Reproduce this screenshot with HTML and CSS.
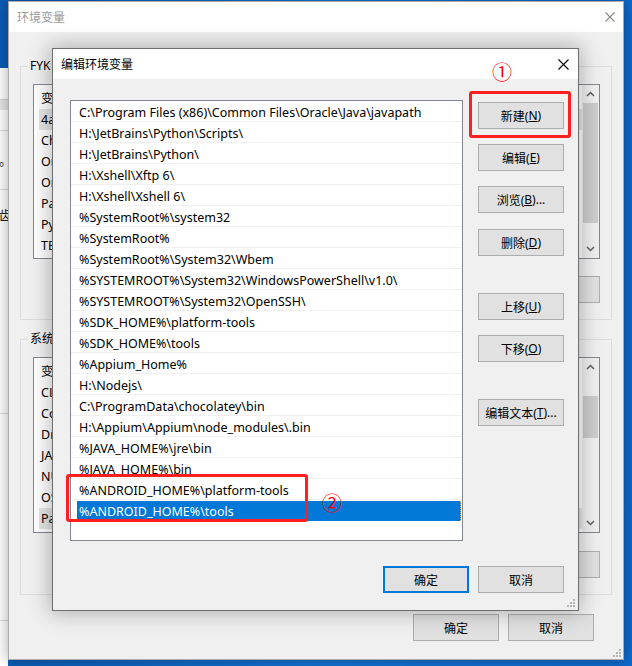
FILE: index.html
```html
<!DOCTYPE html>
<html lang="zh-CN">
<head>
<meta charset="utf-8">
<title>编辑环境变量</title>
<link rel="stylesheet" href="styles.css">
</head>
<body>
<div class="behind">
  <div class="bh-band"></div>
  <div class="bh-line l1"></div>
  <div class="bh-text t1">设置。</div>
  <div class="bh-line l2"></div>
  <div class="bh-text t2">环境变量齿</div>
  <div class="bh-line l3"></div>
  <div class="bh-line l4"></div>
</div>

<div class="envwin">
  <div class="titlebar">
    <span class="title inactive">环境变量</span>
    <svg class="close" width="10" height="10" viewBox="0 0 10 10"><path d="M0.5 0.5L9.5 9.5M9.5 0.5L0.5 9.5" stroke="#8a8a8a" stroke-width="1.1" fill="none"/></svg>
  </div>
  <div class="envbody">
    <div class="group group-user">
      <span class="legend">FYK 的用户变量(U)</span>
      <div class="biglist">
        <div class="bl-content">
          <div class="bl-head"><span class="c1">变量</span><span>值</span></div>
          <div class="bl-row sel"><span class="c1">4a</span><span>C:\4a</span></div>
          <div class="bl-row"><span class="c1">ChocolateyLastPathUpdate</span><span>132</span></div>
          <div class="bl-row"><span class="c1">OneDrive</span><span>C:\Users\FYK\OneDrive</span></div>
          <div class="bl-row"><span class="c1">OneDriveConsumer</span><span>C:\Users\FYK\OneDrive</span></div>
          <div class="bl-row"><span class="c1">Path</span><span>C:\Users\FYK\AppData</span></div>
          <div class="bl-row"><span class="c1">PyCharm</span><span>H:\JetBrains</span></div>
          <div class="bl-row"><span class="c1">TEMP</span><span>C:\Users\FYK\AppData\Local\Temp</span></div>
        </div>
        <div class="vscroll">
          <svg class="arrow" width="9" height="6" viewBox="0 0 9 6"><path d="M1 5L4.5 1.5L8 5" stroke="#606060" stroke-width="1.5" fill="none"/></svg>
          <div class="thumb thumb-user"></div>
          <svg class="arrow down" width="9" height="6" viewBox="0 0 9 6"><path d="M1 1L4.5 4.5L8 1" stroke="#606060" stroke-width="1.5" fill="none"/></svg>
        </div>
      </div>
      <div class="btnrow">
        <div class="btn">新建(<u>N</u>)...</div>
        <div class="btn">编辑(<u>E</u>)...</div>
        <div class="btn">删除(<u>D</u>)</div>
      </div>
    </div>

    <div class="group group-sys">
      <span class="legend">系统变量(S)</span>
      <div class="biglist">
        <div class="bl-content">
          <div class="bl-head"><span class="c1">变量</span><span>值</span></div>
          <div class="bl-row"><span class="c1">CLASSPATH</span><span>.;%JAVA_HOME%\lib</span></div>
          <div class="bl-row"><span class="c1">ComSpec</span><span>C:\Windows\system32\cmd.exe</span></div>
          <div class="bl-row"><span class="c1">DriverData</span><span>C:\Windows\System32\Drivers\DriverData</span></div>
          <div class="bl-row"><span class="c1">JAVA_HOME</span><span>C:\Program Files\Java</span></div>
          <div class="bl-row"><span class="c1">NUMBER_OF_PROCESSORS</span><span>8</span></div>
          <div class="bl-row"><span class="c1">OS</span><span>Windows_NT</span></div>
          <div class="bl-row sel"><span class="c1">Path</span><span>C:\Program Files (x86)\Common Files</span></div>
        </div>
        <div class="vscroll">
          <svg class="arrow" width="9" height="6" viewBox="0 0 9 6"><path d="M1 5L4.5 1.5L8 5" stroke="#606060" stroke-width="1.5" fill="none"/></svg>
          <div class="thumb thumb-sys"></div>
          <svg class="arrow down" width="9" height="6" viewBox="0 0 9 6"><path d="M1 1L4.5 4.5L8 1" stroke="#606060" stroke-width="1.5" fill="none"/></svg>
        </div>
      </div>
      <div class="btnrow">
        <div class="btn">新建(<u>W</u>)...</div>
        <div class="btn">编辑(<u>I</u>)...</div>
        <div class="btn">删除(<u>L</u>)</div>
      </div>
    </div>

    <div class="footrow outer">
      <div class="btn">确定</div>
      <div class="btn">取消</div>
    </div>
  </div>
  <svg class="grip grip-bg" width="9" height="9" viewBox="0 0 9 9"><g fill="#b4b4b4"><rect x="7" y="1" width="2" height="2"/><rect x="4" y="4" width="2" height="2"/><rect x="7" y="4" width="2" height="2"/><rect x="1" y="7" width="2" height="2"/><rect x="4" y="7" width="2" height="2"/><rect x="7" y="7" width="2" height="2"/></g></svg>
</div>

<div class="editdlg">
  <div class="titlebar dlg-title">
    <span class="title">编辑环境变量</span>
    <svg class="close" width="11" height="11" viewBox="0 0 11 11"><path d="M0.5 0.5L10.5 10.5M10.5 0.5L0.5 10.5" stroke="#000" stroke-width="1.1" fill="none"/></svg>
  </div>
  <div class="dlgbody">
    <div class="mainrow">
      <div class="pathlist">
        <div class="prow">C:\Program Files (x86)\Common Files\Oracle\Java\javapath</div>
        <div class="prow">H:\JetBrains\Python\Scripts\</div>
        <div class="prow">H:\JetBrains\Python\</div>
        <div class="prow">H:\Xshell\Xftp 6\</div>
        <div class="prow">H:\Xshell\Xshell 6\</div>
        <div class="prow">%SystemRoot%\system32</div>
        <div class="prow">%SystemRoot%</div>
        <div class="prow">%SystemRoot%\System32\Wbem</div>
        <div class="prow">%SYSTEMROOT%\System32\WindowsPowerShell\v1.0\</div>
        <div class="prow">%SYSTEMROOT%\System32\OpenSSH\</div>
        <div class="prow">%SDK_HOME%\platform-tools</div>
        <div class="prow">%SDK_HOME%\tools</div>
        <div class="prow">%Appium_Home%</div>
        <div class="prow">H:\Nodejs\</div>
        <div class="prow">C:\ProgramData\chocolatey\bin</div>
        <div class="prow">H:\Appium\Appium\node_modules\.bin</div>
        <div class="prow">%JAVA_HOME%\jre\bin</div>
        <div class="prow">%JAVA_HOME%\bin</div>
        <div class="prow">%ANDROID_HOME%\platform-tools</div>
        <div class="prow selected"><span class="seltext">%ANDROID_HOME%\tools</span></div>
      </div>
      <div class="btncol">
        <div class="btn b-new">新建(<u>N</u>)</div>
        <div class="btn b-edit">编辑(<u>E</u>)</div>
        <div class="btn b-browse">浏览(<u>B</u>)...</div>
        <div class="btn b-del">删除(<u>D</u>)</div>
        <div class="btn b-up">上移(<u>U</u>)</div>
        <div class="btn b-down">下移(<u>O</u>)</div>
        <div class="btn b-text">编辑文本(<u>T</u>)...</div>
      </div>
    </div>
    <div class="footrow inner">
      <div class="btn default">确定</div>
      <div class="btn">取消</div>
    </div>
  </div>
  <svg class="grip grip-dlg" width="9" height="9" viewBox="0 0 9 9"><g fill="#b4b4b4"><rect x="7" y="1" width="2" height="2"/><rect x="4" y="4" width="2" height="2"/><rect x="7" y="4" width="2" height="2"/><rect x="1" y="7" width="2" height="2"/><rect x="4" y="7" width="2" height="2"/><rect x="7" y="7" width="2" height="2"/></g></svg>
</div>

<div class="redbox rb1"></div>
<div class="redbox rb2"></div>
<span class="circnum n1">①</span>
<span class="circnum n2">②</span>
</body>
</html>
```

FILE: styles.css
```css
* { box-sizing: border-box; }

body {
  margin: 0;
  width: 632px;
  height: 666px;
  overflow: hidden;
  position: relative;
  font-family: "Noto Sans", "Noto Sans CJK SC", sans-serif;
  font-size: 12px;
  color: #000;
  background: linear-gradient(90deg, #0a5cb6 0%, #1473d2 50%, #0f6acb 100%);
}

u { text-decoration: underline; text-underline-offset: 1px; }

/* window partially hidden at the far left */
.behind {
  position: absolute;
  left: -200px;
  top: 68px;
  width: 208px;
  height: 598px;
  background: #fff;
  overflow: hidden;
}
.bh-band { position: absolute; left: 0; right: 0; top: 31px; height: 11px; background: #e6e6e6; border-top: 1px solid #d0d0d0; }
.bh-line { position: absolute; left: 0; right: 0; height: 1px; background: #dcdcdc; }
.bh-line.l1 { top: 62px; }
.bh-line.l2 { top: 121px; }
.bh-line.l3 { top: 345px; }
.bh-line.l4 { top: 552px; }
.bh-text { position: absolute; right: -4px; font-size: 13px; color: #222; }
.bh-text.t1 { top: 82px; }
.bh-text.t2 { top: 137px; }

/* background window */
.envwin {
  position: absolute;
  left: 8px;
  top: 1px;
  width: 616px;
  height: 659px;
  background: #f0f0f0;
  border: 1px solid #aaaaaa;
  display: flex;
  flex-direction: column;
  box-shadow: 0 0 14px rgba(0, 0, 0, 0.35);
}

.titlebar {
  flex: none;
  height: 30px;
  background: #fff;
  display: flex;
  align-items: center;
  justify-content: space-between;
  padding: 0 8px 0 8px;
}
.title { font-size: 12px; }
.title.inactive { color: #9a9a9a; }

.envbody {
  padding: 0 11px;
  display: flex;
  flex-direction: column;
}

.group {
  position: relative;
  border: 1px solid #dcdcdc;
  padding: 17px 11px 0 12px;
}
.group-user { margin-top: 34px; height: 254px; }
.group-sys { margin-top: 19px; height: 256px; }

.legend {
  position: absolute;
  left: 7px;
  top: -10px;
  padding: 0 2px;
  background: #f0f0f0;
  line-height: 18px;
}

.biglist {
  height: 175px;
  background: #fff;
  border: 1px solid #828790;
  display: flex;
  overflow: hidden;
  font-size: 12.5px;
}
.group-sys .biglist { height: 176px; }
.bl-content { flex: 1; overflow: hidden; }
.bl-head {
  height: 24px;
  display: flex;
  align-items: center;
  padding-left: 7px;
  white-space: nowrap;
}
.bl-row {
  height: 21px;
  display: flex;
  align-items: center;
  padding-left: 2px;
  margin-left: 5px;
  white-space: nowrap;
}
.bl-row.sel { background: #e5e5e5; }
.c1 { width: 160px; flex: none; }

.vscroll {
  flex: none;
  width: 17px;
  background: #f0f0f0;
  display: flex;
  flex-direction: column;
  align-items: center;
}
.vscroll .arrow { flex: none; margin-top: 6px; }
.vscroll .arrow.down { margin-top: auto; margin-bottom: 6px; }
.thumb { width: 15px; background: #cdcdcd; flex: none; }
.thumb-user { margin-top: 6px; height: 120px; }
.thumb-sys { margin-top: 26px; height: 42px; }

.btnrow {
  margin-top: 17px;
  display: flex;
  justify-content: flex-end;
  gap: 9px;
}
.group-sys .btnrow { margin-top: 18px; }

.btn {
  height: 27px;
  width: 86px;
  flex: none;
  background: #e1e1e1;
  border: 1px solid #adadad;
  display: flex;
  align-items: center;
  justify-content: center;
  white-space: nowrap;
}
.btn.default { border: 2px solid #0078d7; }

.footrow {
  display: flex;
  justify-content: flex-end;
  gap: 9px;
}
.footrow.outer { margin-top: 19px; margin-right: 18px; }

.grip { position: absolute; }
.grip-bg { right: 2px; bottom: 2px; }
.grip-dlg { right: 3px; bottom: 3px; }

/* foreground dialog */
.editdlg {
  position: absolute;
  left: 52px;
  top: 48px;
  width: 527px;
  height: 563px;
  background: #f0f0f0;
  border: 1px solid #6e6e6e;
  display: flex;
  flex-direction: column;
  box-shadow: 0 0 20px 2px rgba(0, 0, 0, 0.28);
}
.dlg-title { padding: 0 9px 0 8px; }

.dlgbody {
  padding: 21px 14px 0 17px;
  display: flex;
  flex-direction: column;
}
.mainrow {
  display: flex;
  align-items: flex-start;
  gap: 15px;
}
.pathlist {
  width: 393px;
  height: 441px;
  background: #fff;
  border: 1px solid #828790;
  display: flex;
  flex-direction: column;
  overflow: hidden;
  font-size: 12.5px;
}
.prow {
  flex: none;
  height: 21px;
  border-bottom: 1px solid #f0f0f0;
  display: flex;
  align-items: center;
  padding-left: 8px;
  padding-top: 2px;
  white-space: nowrap;
}
.prow.selected {
  padding-left: 6px;
  padding-right: 1px;
  padding-top: 0;
  border-bottom: none;
}
.seltext {
  flex: 1;
  height: 20px;
  display: flex;
  align-items: center;
  padding-left: 2px;
  padding-top: 2px;
  background: #0078d7;
  color: #fff;
  border-right: 1px dotted #f0a050;
}

.btncol {
  padding-top: 2px;
  display: flex;
  flex-direction: column;
}
.b-edit, .b-browse, .b-down { margin-top: 15px; }
.b-del { margin-top: 16px; }
.b-up, .b-text { margin-top: 37px; }

.footrow.inner { margin-top: 25px; }

/* annotations */
.redbox {
  position: absolute;
  border: 3px solid #ff1f1f;
  border-radius: 3px;
}
.rb1 { left: 469px; top: 91px; width: 102px; height: 47px; }
.rb2 { left: 66px; top: 474px; width: 242px; height: 48px; }

.circnum {
  position: absolute;
  color: #ff0000;
  font-family: "Noto Sans CJK SC", sans-serif;
  font-size: 20px;
  line-height: 20px;
}
.n1 { left: 492px; top: 62px; }
.n2 { left: 322px; top: 493px; }
```
